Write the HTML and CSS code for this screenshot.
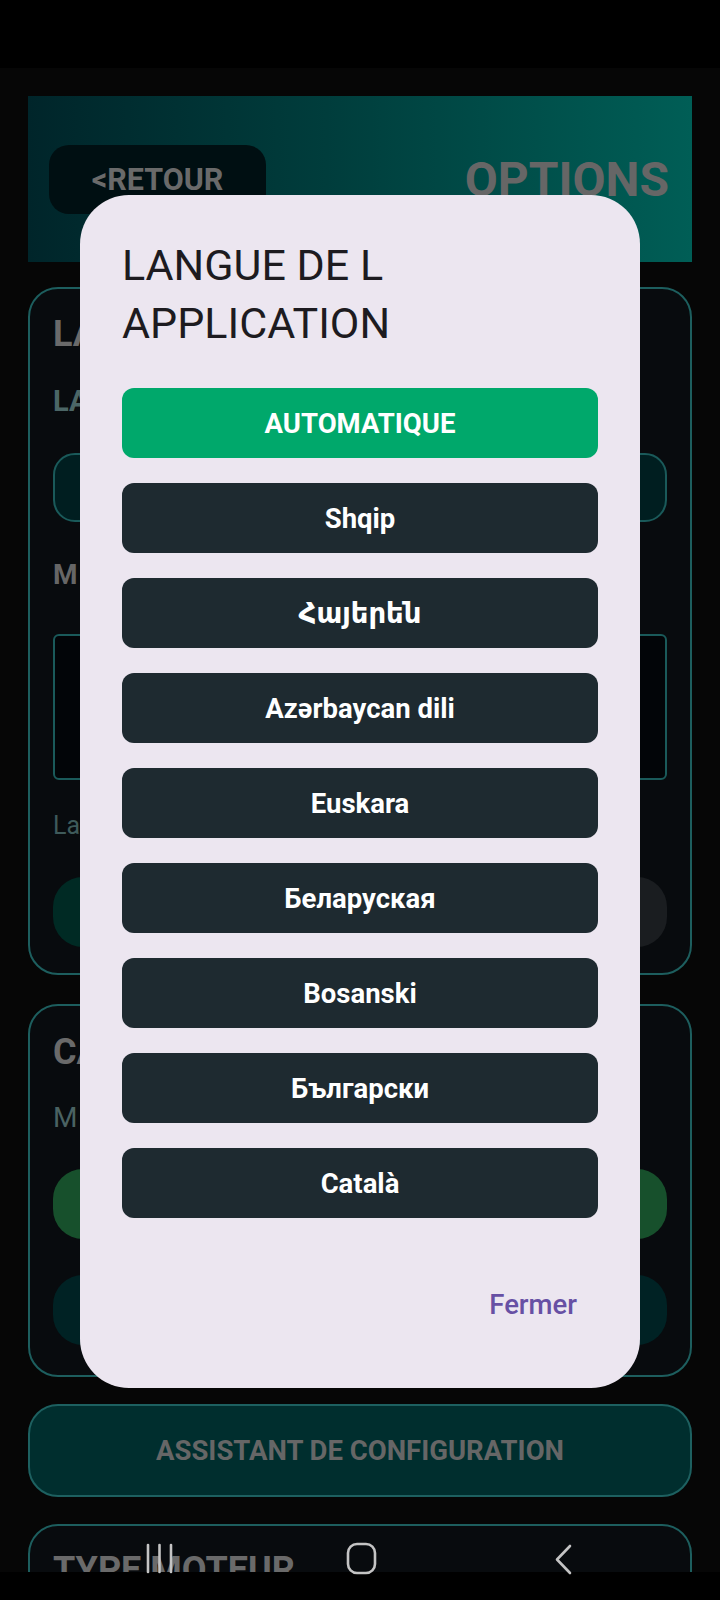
FILE: index.html
```html
<!DOCTYPE html>
<html lang="fr">
<head>
<meta charset="utf-8">
<title>Options</title>
<link rel="stylesheet" href="styles.css">
</head>
<body>
<div class="statusbar"></div>
<main class="page">
  <header class="topbar">
    <div class="back-btn">&lt;RETOUR</div>
    <div class="page-title">OPTIONS</div>
  </header>

  <section class="card card-lang">
    <div class="card-title">LANGUE</div>
    <div class="card-sub">LANGUE</div>
    <div class="field"></div>
    <div class="label">MODÈLE</div>
    <div class="textbox"></div>
    <div class="hint">La</div>
    <div class="btn-row">
      <div class="pill pill-green-dark"></div>
      <div class="pill pill-gray"></div>
    </div>
  </section>

  <section class="card card-cam">
    <div class="card-title">CAMÉRA</div>
    <div class="hint hint-m">Mode</div>
    <div class="pill pill-green"></div>
    <div class="pill pill-teal"></div>
  </section>

  <div class="wizard-btn">ASSISTANT DE CONFIGURATION</div>

  <section class="card card-engine">
    <div class="card-title">TYPE MOTEUR</div>
  </section>
</main>

<div class="dialog">
  <h2 class="dialog-title">LANGUE DE L APPLICATION</h2>
  <div class="lang-list">
    <div class="lang-btn selected">AUTOMATIQUE</div>
    <div class="lang-btn">Shqip</div>
    <div class="lang-btn">Հայերեն</div>
    <div class="lang-btn">Azərbaycan dili</div>
    <div class="lang-btn">Euskara</div>
    <div class="lang-btn">Беларуская</div>
    <div class="lang-btn">Bosanski</div>
    <div class="lang-btn">Български</div>
    <div class="lang-btn">Català</div>
  </div>
  <div class="dialog-actions">
    <div class="text-btn">Fermer</div>
  </div>
</div>

<div class="navbar-bg"></div>
<svg class="navbar-icons" width="720" height="60" viewBox="0 0 720 60" aria-hidden="true">
  <g fill="none" stroke="#c4c4c4" stroke-width="2.6" stroke-linecap="round" stroke-linejoin="round">
    <line x1="148" y1="5" x2="148" y2="32"/>
    <line x1="159.5" y1="5" x2="159.5" y2="32"/>
    <line x1="171" y1="5" x2="171" y2="32"/>
    <rect x="348" y="4" width="27" height="29" rx="9"/>
    <polyline points="570,6 557,19.5 570,33"/>
  </g>
</svg>
</body>
</html>
```

FILE: styles.css
```css
* {
  box-sizing: border-box;
}

html, body {
  margin: 0;
  padding: 0;
  width: 720px;
  height: 1600px;
  overflow: hidden;
}

body {
  position: relative;
  background: #060606;
  font-family: "Roboto", "DejaVu Sans", sans-serif;
}

.statusbar {
  height: 68px;
  background: #000;
}

.page {
  padding: 0 28px;
  display: flex;
  flex-direction: column;
}

.topbar {
  margin-top: 28px;
  height: 166px;
  background: linear-gradient(90deg, #00252a 0%, #003d3c 45%, #005e56 100%);
  display: flex;
  align-items: center;
  justify-content: space-between;
  padding: 0 23px 0 21px;
}

.back-btn {
  width: 217px;
  height: 69px;
  border-radius: 20px;
  background: #000f12;
  color: #6a6a6a;
  font-weight: 700;
  font-size: 30.5px;
  display: flex;
  align-items: center;
  justify-content: center;
}

.page-title {
  color: #666666;
  font-weight: 700;
  font-size: 48px;
  line-height: 1;
  padding-top: 2px;
}

.card {
  border: 2px solid #1d5e5e;
  border-radius: 30px;
  background: #080b0e;
  padding: 23px 23px 26px;
  display: flex;
  flex-direction: column;
}

.card-lang {
  margin-top: 25px;
}

.card-cam {
  margin-top: 29px;
  padding-top: 24px;
  padding-bottom: 30px;
}

.card-engine {
  margin-top: 27px;
  padding-top: 22px;
  height: 200px;
}

.card-title {
  color: #6a6a6a;
  font-weight: 700;
  font-size: 36px;
  line-height: 44px;
}

.card-sub {
  margin-top: 27px;
  color: #4b6666;
  font-weight: 700;
  font-size: 29px;
  line-height: 36px;
}

.field {
  margin-top: 34px;
  height: 69px;
  border: 2px solid #1a5a5a;
  border-radius: 22px;
  background: #001e20;
}

.label {
  margin-top: 36px;
  color: #666;
  font-weight: 700;
  font-size: 28px;
  line-height: 34px;
  letter-spacing: 4px;
}

.textbox {
  margin-top: 42px;
  height: 146px;
  border: 2px solid #1a5a5a;
  border-radius: 6px;
  background: #020508;
}

.hint {
  margin-top: 31px;
  color: #3e5a5a;
  font-size: 25px;
  line-height: 30px;
}

.hint-m {
  margin-top: 27px;
  font-size: 28px;
  line-height: 34px;
  color: #4a6262;
  letter-spacing: 4px;
}

.btn-row {
  margin-top: 36px;
  display: flex;
  gap: 16px;
}

.btn-row .pill {
  flex: 1;
}

.pill {
  height: 70px;
  border-radius: 30px;
}

.pill-green-dark {
  background: #002a24;
}

.pill-gray {
  background: #1a1d20;
}

.pill-green {
  margin-top: 34px;
  background: #17502c;
}

.pill-teal {
  margin-top: 36px;
  background: #002224;
}

.wizard-btn {
  margin-top: 27px;
  height: 93px;
  border: 2px solid #1d6060;
  border-radius: 30px;
  background: #002e2e;
  color: #666;
  font-weight: 700;
  font-size: 27.5px;
  display: flex;
  align-items: center;
  justify-content: center;
}

/* Dialog */
.dialog {
  position: absolute;
  left: 80px;
  top: 195px;
  width: 560px;
  background: #ece6f0;
  border-radius: 49px;
  padding: 41px 42px 48px;
  display: flex;
  flex-direction: column;
}

.dialog-title {
  margin: 0;
  color: #1d1b20;
  font-weight: 400;
  font-size: 43px;
  line-height: 58px;
  width: 330px;
}

.lang-list {
  margin-top: 36px;
  display: flex;
  flex-direction: column;
  gap: 25px;
}

.lang-btn {
  height: 70px;
  border-radius: 12px;
  background: #1e2a30;
  color: #ffffff;
  font-weight: 700;
  font-size: 27.5px;
  display: flex;
  align-items: center;
  justify-content: center;
}

.lang-btn.selected {
  background: #00a86b;
}

.dialog-actions {
  margin-top: 52px;
  display: flex;
  justify-content: flex-end;
}

.text-btn {
  height: 70px;
  line-height: 70px;
  padding: 0 21px;
  color: #6750a4;
  font-weight: 500;
  font-size: 27.5px;
}

/* System navigation bar */
.navbar-bg {
  position: absolute;
  left: 0;
  bottom: 0;
  width: 720px;
  height: 28px;
  background: #000;
}

.navbar-icons {
  position: absolute;
  left: 0;
  top: 1540px;
}
```
